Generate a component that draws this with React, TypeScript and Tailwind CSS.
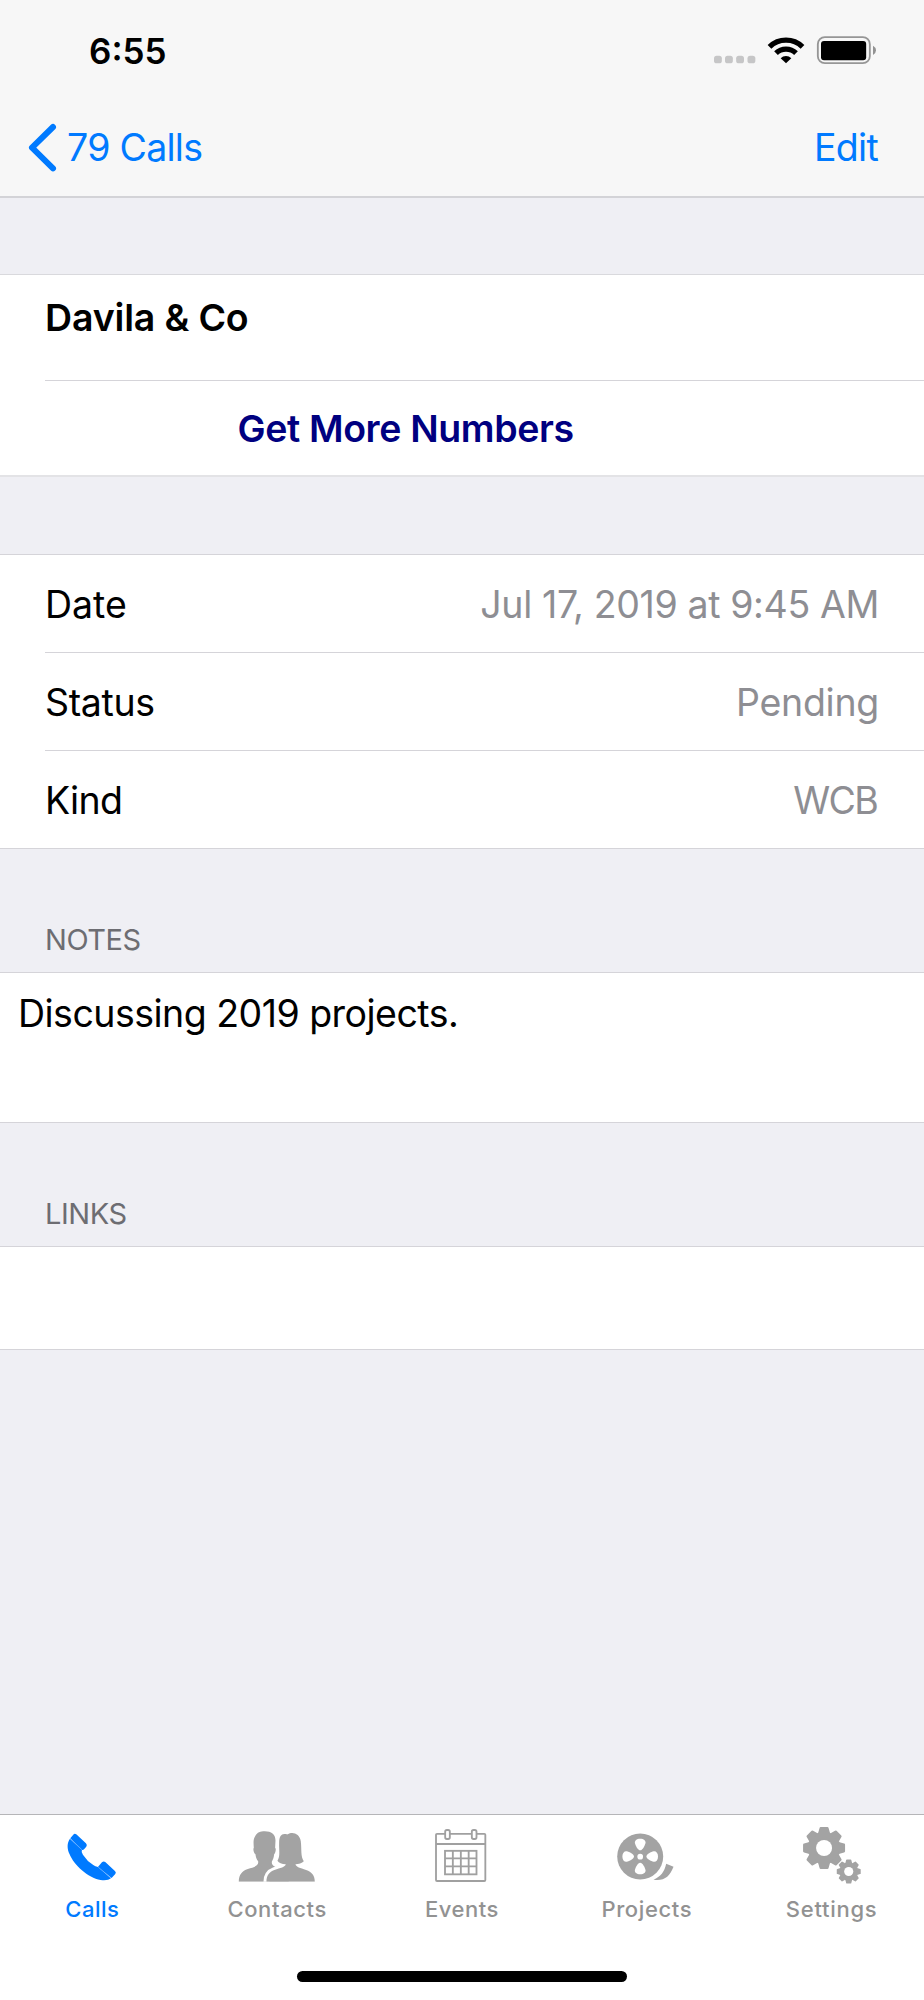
import type { ReactNode } from "react";

function SignalDots() {
  return (
    <svg className="h-8 w-11" viewBox="99 102 132 96" fill="#c6c6c7">
      {[102, 135, 168.5, 202.5].map((x) => (
        <rect key={x} x={x} y="167" width="23.5" height="23" rx="8" />
      ))}
    </svg>
  );
}

function Wifi() {
  return (
    <svg className="h-8 w-10" viewBox="258 102 120 96" fill="none">
      <path d="M268.5 140.5A71 71 0 0 1 367.5 140.5" stroke="#000" strokeWidth="16" />
      <path d="M288 159.5A43.5 43.5 0 0 1 348 159.5" stroke="#000" strokeWidth="16" />
      <path d="M318 190L302 174.5A22.5 22.5 0 0 1 334 174.5Z" fill="#000" />
    </svg>
  );
}

function Battery() {
  return (
    <svg className="h-8 w-[62px]" viewBox="405 102 186 96">
      <rect x="413.5" y="111.5" width="156" height="78" rx="21" fill="none" stroke="#969696" strokeWidth="5.5" />
      <rect x="423" y="123" width="135.5" height="57.5" rx="9" fill="#000" />
      <path d="M579 137Q588 142 588 151T579 165Z" fill="#929292" />
    </svg>
  );
}

function BackChevron() {
  return (
    <svg className="h-[52px] w-8" viewBox="81 366 96 156" fill="none">
      <path d="M159 381L96 443L159 505" stroke="#007aff" strokeWidth="18" strokeLinecap="round" strokeLinejoin="round" />
    </svg>
  );
}

function PhoneIcon() {
  return (
    <svg className="h-[65px] w-21" viewBox="-28.8 0 252 195" fill="#007aff">
      <path d="M31 50C22 63 22 80 30 97C43 129 85 168 123 174C138 176 148 174 154 169L115 135Q107 133 101 129Q82 117 70 98Q64 90 67 84Z" />
      <path d="M32 49L41 38Q45 33 50 37L79 64Q84 69 80 74L74 81Q71 85 67 84Z" />
      <path d="M115 135L127 121Q132 116 137 120L166 147Q171 151 167 156L156 168Z" />
      <path d="M32 50L67 83M116 135L154 168" stroke="#5ca8ff" strokeWidth="1.8" fill="none" />
    </svg>
  );
}

function ContactsIcon() {
  return (
    <svg className="h-[65px] w-21" viewBox="0.6 0 252 195" fill="#a3a3a3">
      <path d="M61 43C68 30 76 28 90 28C110 28 123 38 122 57L121 77C125 80 122 93 118 97C117 108 114 114 111 119C110 133 124 135 138 141C153 148 162 160 162 179H12C12 158 22 147 39 141C56 136 73 132 70 118C65 112 63 105 62 97C57 94 54 81 57 77C56 63 55 52 61 43Z" />
      <path
        d="M95 179C95 161 103 150 119 144C137 138 151 136 153 127C141 126 132 123 128 116"
        fill="none"
        stroke="#fff"
        strokeWidth="18"
      />
      <path d="M95 179C95 161 103 150 119 144C137 138 151 136 153 127C141 126 132 123 128 116C137 103 132 84 133 61C133 43 140 35 150 36C156 36 157 38 159 37C172 28 195 34 198 58C201 83 197 103 207 118C202 124 191 126 182 127C184 136 196 138 214 144C231 150 240 161 240 179Z" />
      <path d="M0 179H252V195H0Z" fill="#fff" />
    </svg>
  );
}

function EventsIcon() {
  return (
    <svg className="h-[65px] w-21" viewBox="60 66 252 195" fill="none" stroke="#a0a0a0" strokeWidth="5.5">
      <rect x="108" y="101.5" width="148" height="141.5" rx="3" />
      <path d="M108 132H256" />
      <rect x="135.5" y="90" width="14" height="27" rx="5" fill="#fff" />
      <rect x="215.5" y="90" width="14" height="27" rx="5" fill="#fff" />
      <rect x="135" y="152.5" width="94.5" height="70.5" />
      <path d="M158.5 152V223M182.5 152V223M206 152V223M135 175H230M135 199H230" />
    </svg>
  );
}

function ProjectsIcon() {
  return (
    <svg className="h-[65px] w-21" viewBox="-15.6 0 252 195" fill="#a3a3a3">
      <circle cx="90" cy="103.5" r="69" />
      <g fill="#fff">
        <circle cx="90" cy="104" r="8.5" />
        {[0, 90, 180, 270].map((angle) => (
          <path
            key={angle}
            transform={`rotate(${angle} 90 103.5)`}
            d="M90 50C101 50 107 56 106 63C104 71 97 85 90 85C83 85 76 71 74 63C73 56 79 50 90 50Z"
          />
        ))}
      </g>
      <path d="M168 125L190 134C178 164 163 177 130 173C151 164 163 149 168 125Z" />
    </svg>
  );
}

function Gear({ x, y, scale }: { x: number; y: number; scale: number }) {
  return (
    <g transform={`translate(${x} ${y}) scale(${scale})`}>
      <circle r="49" />
      {[0, 45, 90, 135, 180, 225, 270, 315].map((angle) => (
        <path
          key={angle}
          transform={`rotate(${angle})`}
          d="M-18 -44L-13.5 -60Q-13 -63 -10 -63H10Q13 -63 13.5 -60L18 -44Z"
        />
      ))}
      <circle r="24" fill="#fff" />
    </g>
  );
}

function SettingsIcon() {
  return (
    <svg className="h-[65px] w-21" viewBox="-16.2 6 252 195" fill="#a3a3a3">
      <Gear x={86} y={84} scale={1} />
      <Gear x={160} y={154.5} scale={0.57} />
    </svg>
  );
}

function DetailRow({ label, children, divider = true }: { label: ReactNode; children: ReactNode; divider?: boolean }) {
  return (
    <div className="flex flex-col">
      <div className="flex h-[97px] items-center justify-between pt-[3px] pr-[45px] pl-[45px] text-[37.5px] leading-[46px]">
        {label}
        {children}
      </div>
      {divider && <div className="ml-[45px] h-px bg-[#d5d4d9]" />}
    </div>
  );
}

function SectionTitle({ children }: { children: string }) {
  return (
    <h2 className="flex h-[123px] items-end pb-[10px] pl-[45px] text-[29px] leading-[44px] tracking-[-0.45px] text-[#6d6d72]">
      {children}
    </h2>
  );
}

const tabs = [
  { label: "Calls", icon: <PhoneIcon />, style: "text-[#007aff] tracking-[0.52px]" },
  { label: "Contacts", icon: <ContactsIcon />, style: "text-[#929292] tracking-[0.61px]" },
  { label: "Events", icon: <EventsIcon />, style: "text-[#929292] tracking-[0.51px]" },
  { label: "Projects", icon: <ProjectsIcon />, style: "text-[#929292] tracking-[0.62px]" },
  { label: "Settings", icon: <SettingsIcon />, style: "text-[#929292] tracking-[0.73px]" },
];

export default function App() {
  return (
    <div className="flex h-[2000px] w-[924px] flex-col overflow-hidden bg-[#efeff4] font-['Inter','Liberation_Sans',sans-serif] text-black">
      <header className="h-[198px] border-b-2 border-[#d3d3d7] bg-[#f7f7f7]">
        <div className="flex h-[100px] items-center justify-between pr-[47px] pl-[89px]">
          <span className="pt-[2px] text-[35px] leading-[44px] font-semibold">6:55</span>
          <div className="flex items-center gap-[9px]">
            <SignalDots />
            <Wifi />
            <Battery />
          </div>
        </div>
        <nav className="flex h-24 items-center justify-between pr-[46px] pl-[27px] text-[37.5px] leading-[46px] text-[#007aff]">
          <a className="flex items-center gap-2 tracking-[-0.72px]">
            <BackChevron />
            79 Calls
          </a>
          <a className="tracking-[-0.7px]">Edit</a>
        </nav>
      </header>

      <main className="flex flex-1 flex-col">
        <section className="mt-[76px] border-t border-b-2 border-t-[#d9d9dd] border-b-[#e3e3e6] bg-white">
          <h1 className="h-[105px] pt-5 pl-[45px] text-[37.5px] leading-[46px] font-semibold tracking-[-0.17px]">
            Davila &amp; Co
          </h1>
          <div className="ml-[45px] h-px bg-[#d5d4d9]" />
          <button className="flex h-[94px] items-center pt-[2px] pl-[237.5px] text-[37.5px] leading-[46px] font-semibold tracking-[-0.38px] text-[#000080]">
            Get More Numbers
          </button>
        </section>

        <section className="mt-[77px] border-y border-[#d5d4d9] bg-white">
          <DetailRow label={<span>Date</span>}>
            <span className="tracking-[-0.37px] text-[#8e8e93]">Jul 17, 2019 at 9:45 AM</span>
          </DetailRow>
          <DetailRow label={<span className="tracking-[-0.34px]">Status</span>}>
            <span className="tracking-[-0.28px] text-[#8e8e93]">Pending</span>
          </DetailRow>
          <DetailRow label={<span className="tracking-[-0.7px]">Kind</span>} divider={false}>
            <span className="mr-[2px] tracking-[-1.7px] text-[#8e8e93]">WCB</span>
          </DetailRow>
        </section>

        <SectionTitle>NOTES</SectionTitle>
        <p className="h-[151px] border-y border-[#d5d4d9] bg-white pt-[18px] pl-[18px] text-[37.5px] leading-[46px] tracking-[-0.52px]">
          Discussing 2019 projects.
        </p>

        <SectionTitle>LINKS</SectionTitle>
        <div className="h-[104px] border-y border-[#d5d4d9] bg-white" />
      </main>

      <footer className="flex h-[186px] flex-col items-center border-t border-[#b5b5b8] bg-white pt-[7px]">
        <div className="grid w-full grid-cols-5">
          {tabs.map((tab) => (
            <button key={tab.label} className={`flex flex-col items-center text-[22px] leading-7 font-medium ${tab.style}`}>
              {tab.icon}
              <span className="mt-2">{tab.label}</span>
            </button>
          ))}
        </div>
        <div className="mt-12 h-[11px] w-[330px] rounded-full bg-black" />
      </footer>
    </div>
  );
}
